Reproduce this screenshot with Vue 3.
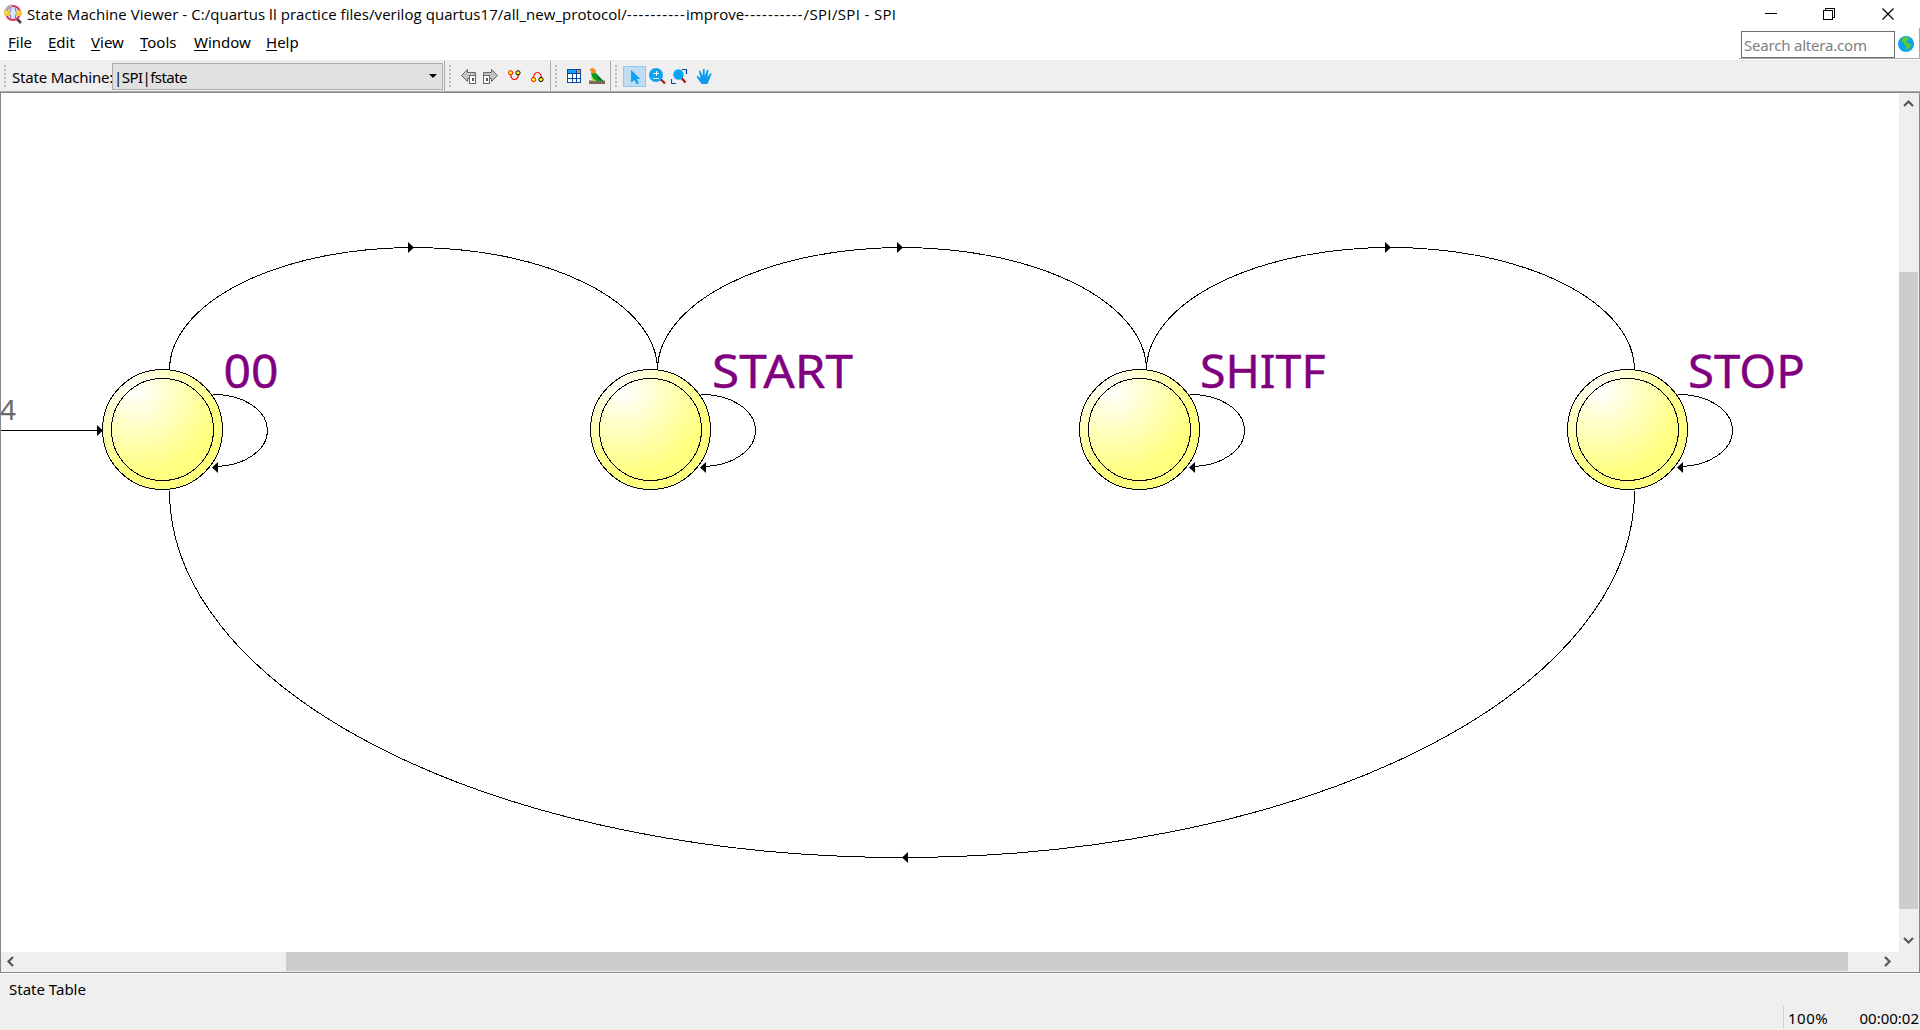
<script setup>
const menus = [
  { key: 'F', rest: 'ile', w: 40 },
  { key: 'E', rest: 'dit', w: 43 },
  { key: 'V', rest: 'iew', w: 49 },
  { key: 'T', rest: 'ools', w: 54 },
  { key: 'W', rest: 'indow', w: 72 },
  { key: 'H', rest: 'elp', w: 50 },
]
const states = [
  { name: '00', cx: 162.5, lx: 223.5, lw: 55 },
  { name: 'START', cx: 650.5, lx: 712, lw: 141 },
  { name: 'SHITF', cx: 1139.5, lx: 1200, lw: 125.5 },
  { name: 'STOP', cx: 1627.5, lx: 1688, lw: 117 },
]
const arcs = [
  { from: 169.5, to: 657.5, tip: 414 },
  { from: 657.5, to: 1146.5, tip: 903 },
  { from: 1146.5, to: 1634.5, tip: 1391 },
]
</script>

<template>
  <div class="window">
    <header class="titlebar">
      <svg class="app-icon" width="20" height="20" viewBox="0 0 20 20">
        <path d="M13.5 14.5l4.500 4.500" stroke="#444" stroke-width="2.600" />
        <circle cx="10" cy="9" r="7" fill="#dce8f8" stroke="#e0305a" stroke-width="2" />
        <path d="M9 1.500a8 8 0 0 0-7 7" stroke="#b5b5b5" stroke-width="2.500" fill="none" />
        <path d="M8 4q-3 5 0 10M12 4q3 5 0 10" stroke="#5b76bd" fill="none" />
        <circle cx="4" cy="9.300" r="3" fill="#f5c526" /><circle cx="16" cy="9.300" r="3" fill="#f5c526" />
        <circle cx="3.500" cy="8.500" r="1" fill="#fff1a0" /><circle cx="15.500" cy="8.500" r="1" fill="#fff1a0" />
      </svg>
      <span class="title">State Machine Viewer - C:/quartus ll practice files/verilog quartus17/all_new_protocol/<span class="dashes">----------</span>improve<span class="dashes">----------</span><span class="tail">/SPI/SPI - SPI</span></span>
      <svg class="controls" width="150" height="28" viewBox="0 0 150 28" shape-rendering="crispEdges" fill="none" stroke="#000">
        <path d="M15 13.500h12M73.500 10.500h9v9h-9zM75.500 10v-1.500h9v9h-2" />
        <path d="M132.500 8.500l11 11M143.500 8.500l-11 11" shape-rendering="auto" stroke-width="1.200" />
      </svg>
    </header>

    <div class="menubar">
      <nav>
        <span v-for="m in menus" :key="m.key" class="menu" :style="{ width: m.w + 'px' }"><u>{{ m.key }}</u>{{ m.rest }}</span>
      </nav>
      <div class="search">
        <div class="field">Search altera.com</div>
        <svg width="16" height="16" viewBox="0 0 16 16">
          <circle cx="8" cy="8" r="8" fill="#0da2f2" />
          <path d="M3.500 2.500L8 1l3 1-1 2-2 1 1 2 4 1-1 3-3 3-1-.5.5-3-2-2-.5-2-2-1z" fill="#5fd01c" />
        </svg>
      </div>
    </div>

    <div class="toolbar">
      <div class="group machine">
        <i class="grip"></i>
        <span class="label">State Machine:</span>
        <div class="combo"><span>|SPI|fstate</span><i class="drop"></i></div>
      </div>
      <div class="group nav">
        <i class="grip"></i>
        <svg width="15" height="15" viewBox="0 0 15 15" shape-rendering="crispEdges"><path d="M.5 6.500L6.500.5v3h8v6h-8v3z" fill="#c4c4c4" stroke="#666" shape-rendering="auto" /><path d="M8.500 6.500h6v8h-6z" fill="#fff" stroke="#666" /><path d="M10.500 9h2v3h-2z" fill="#555" /></svg>
        <svg width="15" height="15" viewBox="0 0 15 15" shape-rendering="crispEdges"><path d="M14.500 6.500L8.500.5v3h-8v6h8v3z" fill="#c4c4c4" stroke="#666" shape-rendering="auto" /><path d="M.5 6.500h6v8h-6z" fill="#fff" stroke="#666" /><path d="M2.500 9h2v3h-2z" fill="#555" /></svg>
        <svg width="13" height="15" viewBox="0 0 13 15"><path d="M2.500 5Q3 10.500 6.500 10.500T10.500 5" stroke="#f00" fill="none" stroke-width="1.200" /><circle cx="2.600" cy="3.800" r="2.100" fill="#ff0" stroke="#f00" /><circle cx="10" cy="3.800" r="2.100" fill="#ff0" stroke="#000" /></svg>
        <svg width="13" height="15" viewBox="0 0 13 15"><path d="M2.500 9Q3 3.500 6.500 3.500T10.500 9" stroke="#f00" fill="none" stroke-width="1.200" /><circle cx="2.600" cy="10.500" r="2.100" fill="#ff0" stroke="#f00" /><circle cx="10" cy="10.500" r="2.100" fill="#ff0" stroke="#000" /></svg>
      </div>
      <div class="group views">
        <i class="grip"></i>
        <svg width="14" height="14" viewBox="0 0 14 14" shape-rendering="crispEdges"><path d="M0 0h14v14H0z" fill="#fff" /><path d="M0 0h9v4H0z" fill="#0da2f2" /><path d="M9 0h4v4H9z" fill="#f79113" /><path d="M.5.5h13v13H.5zM0 4.500h14M0 9.500h14M5.500 4v10M9.500 0v14" fill="none" stroke="#0747a6" /></svg>
        <svg width="16" height="16" viewBox="0 0 16 16"><path d="M0 12.500h16V16H0z" fill="#806660" /><path d="M2 5q3-2 5 0l8 8.500-4-.5q-7 1-8-4z" fill="#0b9b2d" /><path d="M8 7l6 6-5-2z" fill="#07651b" /><path d="M0 2.500L2.500 0q4 0 4.500 4L3 6 2 3z" fill="#f68b1f" /><path d="M2.500 6.500q1 5 5 6l-2 1q-4-1-3-7z" fill="#a8e030" /></svg>
      </div>
      <div class="group tools">
        <i class="grip"></i>
        <span class="active"><svg width="12" height="16" viewBox="0 0 12 16"><path d="M1 1l9.500 9H6.700l2.300 4-2.300 1.200-2.200-4.200L1 13.500z" fill="#0da2f2" /></svg></span>
        <svg class="z1" width="17" height="17" viewBox="0 0 17 17"><path d="M11 10.500l5 5" stroke="#b01717" stroke-width="2.300" /><circle cx="7" cy="7" r="7" fill="#0da2f2" /><path d="M4 5.500h6M7.500 3v5M4 10.500h6" stroke="#fff" shape-rendering="crispEdges" /></svg>
        <svg class="z2" width="17" height="17" viewBox="0 0 17 17"><path d="M10.500 10l4 4.500" stroke="#b01717" stroke-width="2.300" /><circle cx="7.500" cy="6.500" r="5.200" fill="#0da2f2" /><path d="M11 1.500h4.500V6M.5 11v4.500H5" fill="none" stroke="#0747a6" stroke-width="1.200" /></svg>
        <svg class="hand" width="16" height="17" viewBox="0 0 16 17"><path d="M5.500 16L1 9.500q-1-2 .5-1.500L4.500 10 3 3.500Q3 2 4.500 3l2 5L7 1.500q1-1.500 1.700 0V8l2.300-6q1.500-1.200 1.500.5L11.300 9l3-3.500q1.700-.7 1.200.7L11.500 16z" fill="#0d9cec" /></svg>
      </div>
    </div>

    <main class="viewer">
      <div class="upper">
        <svg class="diagram" width="1898" height="859" viewBox="1 93 1898 859">
          <defs>
            <radialGradient id="ball" cx=".28" cy=".17" r=".7">
              <stop offset="0" stop-color="#fff" /><stop offset="1" stop-color="#ffff80" />
            </radialGradient>
          </defs>
          <g class="line">
            <path d="M1 430.500h98" />
            <path v-for="a in arcs" :key="a.tip" :d="`M${a.from} 370A${(a.to - a.from) / 2} 122.500 0 0 1 ${a.to} 370`" />
            <path d="M169.500 491A732.500 366.500 0 0 0 1634.500 491" />
          </g>
          <g class="tips">
            <path v-for="a in arcs" :key="a.tip" :d="`M${a.tip} 247.500l-6-5.500v11z`" />
            <path d="M902 857.500l6-5.500v11z" />
            <path d="M103 430.500l-6-5.500v11z" />
          </g>
          <g v-for="s in states" :key="s.name">
            <path class="line" :d="`M${s.cx + 51} 394.500A53 36 0 0 1 ${s.cx + 53} 466.500`" />
            <circle class="ring" :cx="s.cx" cy="429.500" r="60" />
            <circle class="ring clear" :cx="s.cx" cy="429.500" r="51" />
            <path class="tips" :d="`M${s.cx + 49.500} 467.500l6-5.500v11z`" />
            <text class="name" :x="s.lx" y="387.500" :textLength="s.lw" lengthAdjust="spacingAndGlyphs">{{ s.name }}</text>
          </g>
          <text class="port" x="0" y="420">4</text>
        </svg>
        <div class="vbar">
          <svg width="20" height="20" viewBox="0 0 20 20"><path d="M5 13L9.500 8.500 14 13" /></svg>
          <i class="vthumb"></i>
          <svg width="20" height="20" viewBox="0 0 20 20"><path d="M5 6l4.500 4.500L14 6" /></svg>
        </div>
      </div>
      <div class="hbar">
        <svg width="20" height="20" viewBox="0 0 20 20"><path d="M12 5L7.500 9.500 12 14" /></svg>
        <i class="hthumb"></i>
        <svg class="right" width="20" height="20" viewBox="0 0 20 20"><path d="M7 5l4.500 4.500L7 14" /></svg>
      </div>
    </main>

    <footer>
      <span class="hint">State Table</span>
      <div class="status"><span class="pct">100%</span><span class="time">00:00:02</span></div>
    </footer>
  </div>
</template>

<style>
body { margin: 0; overflow: hidden; }
</style>

<style scoped>
.window { width: 1920px; height: 1030px; display: flex; flex-direction: column; background: #fff; color: #000; font: 15px/20px "Noto Sans", sans-serif; white-space: nowrap; overflow: hidden; }
svg { display: block; flex: none; }
.titlebar { height: 28px; display: flex; align-items: center; }
.app-icon { margin: 0 4px 0 3px; }
.title { font: 15px/20px "Open Sans", sans-serif; letter-spacing: .05px; }
.dashes { letter-spacing: 1.100px; }
.tail { letter-spacing: .35px; }
.controls { margin-left: auto; margin-right: 20px; }
.menubar { height: 33px; display: flex; justify-content: space-between; border-bottom: 1px solid #e9e9e9; box-sizing: border-box; }
nav { display: flex; padding: 4px 0 0 8px; }
.menu u { text-underline-offset: 2px; text-decoration-thickness: 1px; }
.search { width: 181px; height: 31px; border-right: 1px solid #aaa; border-bottom: 1px solid #aaa; box-sizing: border-box; display: flex; align-items: flex-start; padding: 3px 0 0 2px; gap: 3px; }
.field { width: 154px; height: 27px; box-sizing: border-box; border: 1px solid #6f6f6f; color: #808080; padding: 3px 2px; line-height: 20px; flex: none; letter-spacing: -.2px; }
.search svg { margin-top: 5px; }
.toolbar { height: 31px; background: #efefef; display: flex; border-bottom: 1px solid #aaa; box-sizing: border-box; }
.group { display: flex; align-items: center; box-sizing: border-box; border-right: 1px solid #aaa; height: 30px; }
.grip { flex: none; width: 2px; height: 22px; background: repeating-linear-gradient(#bbb 0 2px, transparent 2px 4px); }
.machine { width: 445px; padding-left: 4px; }
.label { width: 100px; margin-left: 6px; letter-spacing: -.2px; padding-top: 2px; box-sizing: border-box; }
.combo { width: 331px; height: 27px; box-sizing: border-box; border: 1px solid #adadad; background: #e1e1e1; display: flex; align-items: center; justify-content: space-between; padding: 0 5px 0 1px; margin-top: 1px; letter-spacing: -.55px; }
.drop { border: 4px solid transparent; border-top: 4px solid #000; border-bottom: 0; margin-top: -1px; }
.nav { width: 106px; padding-left: 4px; }
.nav svg:nth-of-type(1) { margin-left: 10px; }
.nav svg:nth-of-type(2) { margin-left: 7px; }
.nav svg:nth-of-type(3) { margin-left: 10px; }
.nav svg:nth-of-type(4) { margin-left: 10px; }
.views { width: 60px; padding-left: 4px; }
.views svg:nth-of-type(1) { margin-left: 10px; }
.views svg:nth-of-type(2) { margin-left: 8px; }
.tools { border: 0; padding-left: 4px; }
.active { width: 23px; height: 21px; box-sizing: border-box; border: 1px solid #90c8f6; background: #c0dcf3; margin-left: 6px; display: flex; padding: 2px 0 0 6px; }
.z1 { margin-left: 3px; }
.z2 { margin-left: 5px; }
.hand { margin-left: 8px; }
.viewer { height: 881px; box-sizing: border-box; border: 1px solid #828790; }
.upper { display: flex; height: 859px; }
.vbar { width: 20px; background: #efefef; display: flex; flex-direction: column; }
.vthumb { height: 637px; width: 19px; background: #cdcdcd; margin: 159px 0 23px; }
.hbar { height: 20px; background: #efefef; display: flex; align-items: flex-start; }
.hthumb { width: 1562px; height: 19px; background: #cdcdcd; margin-left: 265px; }
.right { margin-left: 30px; }
.vbar path, .hbar path { fill: none; stroke: #555; stroke-width: 2.200; }
.line { fill: none; stroke: #000; stroke-width: 1; shape-rendering: crispEdges; }
.ring { fill: url(#ball); stroke: #000; shape-rendering: crispEdges; }
.clear { fill: none; }
.name { font: 45px "Noto Sans", sans-serif; fill: #800080; stroke: #800080; stroke-width: .4px; }
.port { font: 28px "Noto Sans", sans-serif; fill: #696969; }
footer { flex: 1; background: #efefef; border-top: 1px solid #fff; display: flex; flex-direction: column; justify-content: space-between; }
.hint { padding: 5px 0 0 9px; }
.status { align-self: flex-end; display: flex; width: 137px; height: 22px; border-left: 1px solid #d0d0d0; box-sizing: border-box; margin-bottom: 2px; padding-left: 4px; justify-content: space-between; line-height: 25px; }
.pct { letter-spacing: .5px; }
.time { margin-right: 1px; }
</style>
